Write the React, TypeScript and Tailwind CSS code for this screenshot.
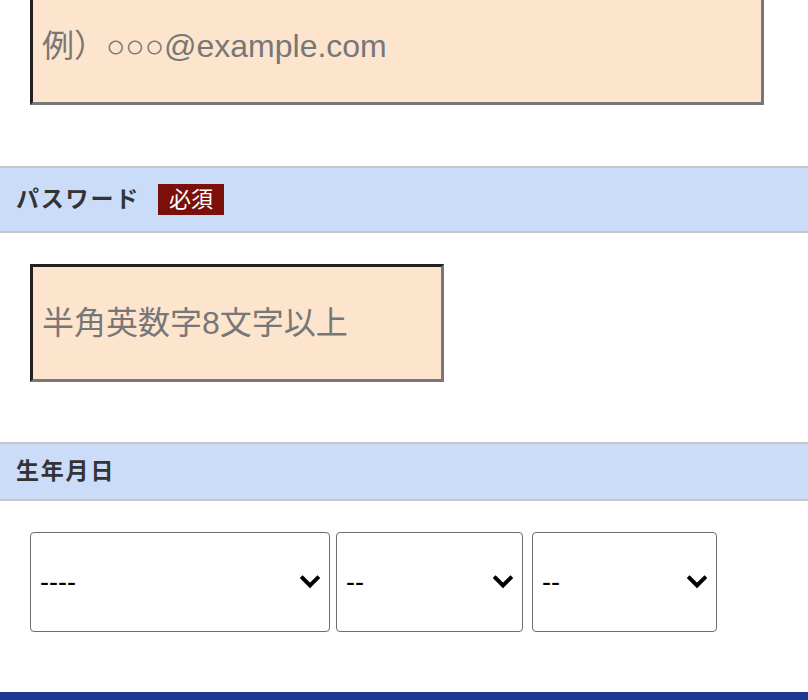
import React from 'react';

const jp = { fontFamily: '"Liberation Sans", "Noto Sans CJK JP", sans-serif' };

const SectionHeader: React.FC<{ label: string; required?: boolean; tall?: boolean }> = ({ label, required, tall }) => (
  <div
    className={`flex items-center gap-[18px] border-y-2 border-[#c6c6c6] bg-[#cadcf8] pl-[16px] ${tall ? 'h-[67px]' : 'h-[59px]'}`}
  >
    <span className="text-[23px] font-bold leading-none text-[#333333] tracking-[1.8px]">{label}</span>
    {required && (
      <span className="flex h-[31px] items-center bg-[#7b0f09] px-[11px] text-[22px] leading-none text-white">
        必須
      </span>
    )}
  </div>
);

const TextBox: React.FC<{ placeholder: string; width: string; type?: string }> = ({ placeholder, width, type = 'text' }) => (
  <input
    type={type}
    placeholder={placeholder}
    className={`${width} h-[118px] border-[3px] border-t-[#222222] border-l-[#222222] border-r-[#777777] border-b-[#777777] bg-[#fde5cd] px-[9px] text-[32px] text-[#333] placeholder:text-[#777777] outline-none`}
    style={jp}
  />
);

const Chevron = () => (
  <svg width="20" height="14" viewBox="0 0 20 14" className="pointer-events-none absolute right-[10px] top-1/2 -translate-y-1/2">
    <polyline points="2.5,3 10,10.5 17.5,3" fill="none" stroke="#000" strokeWidth="4" strokeLinecap="square" />
  </svg>
);

const Select: React.FC<{ width: string; blank: string; extra?: string }> = ({ width, blank, extra = '' }) => (
  <div className={`relative ${width} ${extra}`}>
    <select
      className="h-[100px] w-full appearance-none rounded-[4px] border-[1.5px] border-[#6e6e6e] bg-white pl-[9px] text-[27px] text-black outline-none"
      style={jp}
      defaultValue=""
    >
      <option value="">{blank}</option>
    </select>
    <Chevron />
  </div>
);

export default function App() {
  return (
    <div className="min-h-[700px] w-full bg-white" style={jp}>
      {/* email input, scrolled partly out of view */}
      <div className="-mt-[13px] px-[30px] pb-[61px]">
        <TextBox placeholder="例）○○○@example.com" width="w-[734px]" type="email" />
      </div>

      <SectionHeader label="パスワード" required tall />
      <div className="px-[30px] pt-[31px] pb-[60px]">
        <TextBox placeholder="半角英数字8文字以上" width="w-[414px]" type="password" />
      </div>

      <SectionHeader label="生年月日" />
      <div className="flex gap-[6px] px-[30px] pt-[31px] pb-[60px]">
        <Select width="w-[300px]" blank="----" />
        <Select width="w-[187px]" blank="--" />
        <Select width="w-[185px]" blank="--" extra="ml-[3px]" />
      </div>

      <div className="h-[8px] bg-[#1f3692]" />
    </div>
  );
}
